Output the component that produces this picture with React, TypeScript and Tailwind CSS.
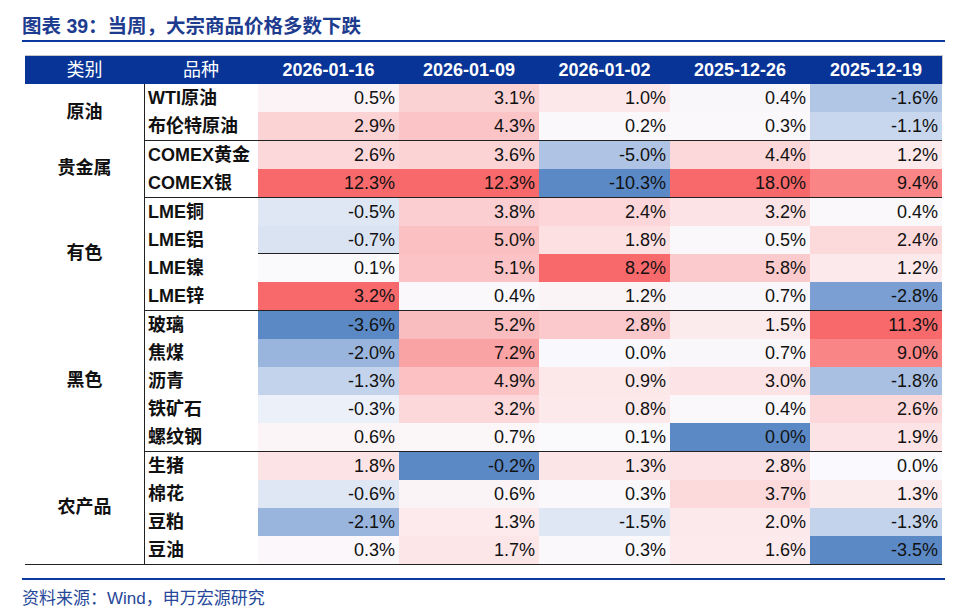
import React from "react"

type Cell = [string, string]
type Row = { name: string; vals: Cell[]; lineUnderFirst?: boolean }
type Group = { name: string; rows: Row[] }

const R5 = "#f8696b"
const R4 = "#f98587"
const R3 = "#f9a3a5"

const groups: Group[] = [
    {
        name: "原油",
        rows: [
            { name: "WTI原油", vals: [["0.5%", "#fbf3f5"], ["3.1%", "#fbd2d4"], ["1.0%", "#fce8ea"], ["0.4%", "#faf7fa"], ["-1.6%", "#b1c6e5"]] },
            { name: "布伦特原油", vals: [["2.9%", "#fbd3d5"], ["4.3%", "#fbc4c6"], ["0.2%", "#faf8fb"], ["0.3%", "#faf8fb"], ["-1.1%", "#c8d7ed"]] },
        ],
    },
    {
        name: "贵金属",
        rows: [
            { name: "COMEX黄金", vals: [["2.6%", "#fcd8da"], ["3.6%", "#fbd3d5"], ["-5.0%", "#afc4e4"], ["4.4%", "#fcd8da"], ["1.2%", "#fce9eb"]] },
            { name: "COMEX银", vals: [["12.3%", R5], ["12.3%", R5], ["-10.3%", "#5b89c6"], ["18.0%", R5], ["9.4%", R4]] },
        ],
    },
    {
        name: "有色",
        rows: [
            { name: "LME铜", vals: [["-0.5%", "#dfe7f5"], ["3.8%", "#fbcfd1"], ["2.4%", "#fcd6d8"], ["3.2%", "#fce3e5"], ["0.4%", "#faf8fb"]] },
            { name: "LME铝", vals: [["-0.7%", "#dae3f2"], ["5.0%", "#fbc0c2"], ["1.8%", "#fce0e2"], ["0.5%", "#faf8fb"], ["2.4%", "#fcdadc"]], lineUnderFirst: true },
            { name: "LME镍", vals: [["0.1%", "#faf9fc"], ["5.1%", "#fbc3c5"], ["8.2%", R5], ["5.8%", "#fbcacc"], ["1.2%", "#fce9eb"]] },
            { name: "LME锌", vals: [["3.2%", R5], ["0.4%", "#faf8fb"], ["1.2%", "#fbf4f6"], ["0.7%", "#faf7fa"], ["-2.8%", "#7b9fd2"]] },
        ],
    },
    {
        name: "黑色",
        rows: [
            { name: "玻璃", vals: [["-3.6%", "#5b89c6"], ["5.2%", "#fabdbf"], ["2.8%", "#fbc9cb"], ["1.5%", "#fcebed"], ["11.3%", R5]] },
            { name: "焦煤", vals: [["-2.0%", "#9ab5dd"], ["7.2%", R3], ["0.0%", "#f9f9fd"], ["0.7%", "#faf7fa"], ["9.0%", R4]] },
            { name: "沥青", vals: [["-1.3%", "#c3d3eb"], ["4.9%", "#fbc1c3"], ["0.9%", "#fce7e9"], ["3.0%", "#fce3e5"], ["-1.8%", "#a9c0e2"]] },
            { name: "铁矿石", vals: [["-0.3%", "#ebf0f9"], ["3.2%", "#fcd8da"], ["0.8%", "#fce9eb"], ["0.4%", "#faf8fb"], ["2.6%", "#fcd8da"]] },
            { name: "螺纹钢", vals: [["0.6%", "#fbf5f8"], ["0.7%", "#fbf6f8"], ["0.1%", "#faf9fc"], ["0.0%", "#5b89c6"], ["1.9%", "#fce4e6"]] },
        ],
    },
    {
        name: "农产品",
        rows: [
            { name: "生猪", vals: [["1.8%", "#fce4e6"], ["-0.2%", "#5b89c6"], ["1.3%", "#fce5e7"], ["2.8%", "#fce4e6"], ["0.0%", "#f9f9fe"]] },
            { name: "棉花", vals: [["-0.6%", "#dfe7f5"], ["0.6%", "#fbf4f7"], ["0.3%", "#faf8fb"], ["3.7%", "#fcdadc"], ["1.3%", "#fcebed"]] },
            { name: "豆粕", vals: [["-2.1%", "#9ab5dd"], ["1.3%", "#fceaec"], ["-1.5%", "#dfe7f5"], ["2.0%", "#fce9eb"], ["-1.3%", "#c3d3eb"]] },
            { name: "豆油", vals: [["0.3%", "#fbf7fa"], ["1.7%", "#fce6e8"], ["0.3%", "#faf8fb"], ["1.6%", "#fceaec"], ["-3.5%", "#5b89c6"]] },
        ],
    },
]

const dates = ["2026-01-16", "2026-01-09", "2026-01-02", "2025-12-26", "2025-12-19"]
const valWidths = ["w-[141px]", "w-[140px]", "w-[131px]", "w-[140px]", "w-[132px]"]

function DataRow({ row }: { row: Row }) {
    return (
        <div className="flex h-[28px]">
            <div className="w-[113px] pl-[3px] font-bold leading-[28px] whitespace-nowrap">{row.name}</div>
            {row.vals.map(([text, color], i) => (
                <div
                    key={i}
                    className={`${valWidths[i]} pr-[4px] text-right leading-[28px] ${i === 0 && row.lineUnderFirst ? "border-b border-[#222]" : ""}`}
                    style={{ backgroundColor: color }}
                >
                    {text}
                </div>
            ))}
        </div>
    )
}

export default function App() {
    return (
        <div className="w-[960px] h-[616px] bg-white font-['Liberation_Sans','Noto_Sans_CJK_SC',sans-serif] text-[#111]">
            <div className="pl-[22px] w-[945px]">
                {/* title */}
                <div className="pt-[13px] h-[40px] text-[19.5px] leading-[27px] font-bold text-[#1d3c8f] whitespace-nowrap">
                    图表 39：当周，大宗商品价格多数下跌
                </div>
                <div className="h-[2px] bg-[#0b3a9e]" />

                {/* table */}
                <div className="ml-[3px] mt-[13px] w-[918px] text-[18px]">
                    <div className="flex h-[29px] border-t border-r border-[#c6c6c6] bg-[#073496] text-white leading-[28px]">
                        <div className="w-[119px] text-center">类别</div>
                        <div className="w-[114px] text-center">品种</div>
                        {dates.map((d, i) => (
                            <div key={d} className={`${valWidths[i]} text-center font-bold`}>
                                {d}
                            </div>
                        ))}
                    </div>

                    <div className="border-b border-[#222] w-[917px]">
                        {groups.map((g, gi) => (
                            <div key={g.name} className="flex">
                                <div className="w-[119px] flex items-center justify-center font-bold">{g.name}</div>
                                <div className={`flex-1 border-l border-[#222] ${gi > 0 ? "border-t" : ""}`}>
                                    {g.rows.map((r) => (
                                        <DataRow key={r.name} row={r} />
                                    ))}
                                </div>
                            </div>
                        ))}
                    </div>
                </div>

                {/* source */}
                <div className="mt-[13px] h-[2px] bg-[#0b3a9e]" />
                <div className="pt-[6px] text-[17px] leading-[26px] text-[#27489a] whitespace-nowrap">
                    资料来源：Wind，申万宏源研究
                </div>
            </div>
        </div>
    )
}
